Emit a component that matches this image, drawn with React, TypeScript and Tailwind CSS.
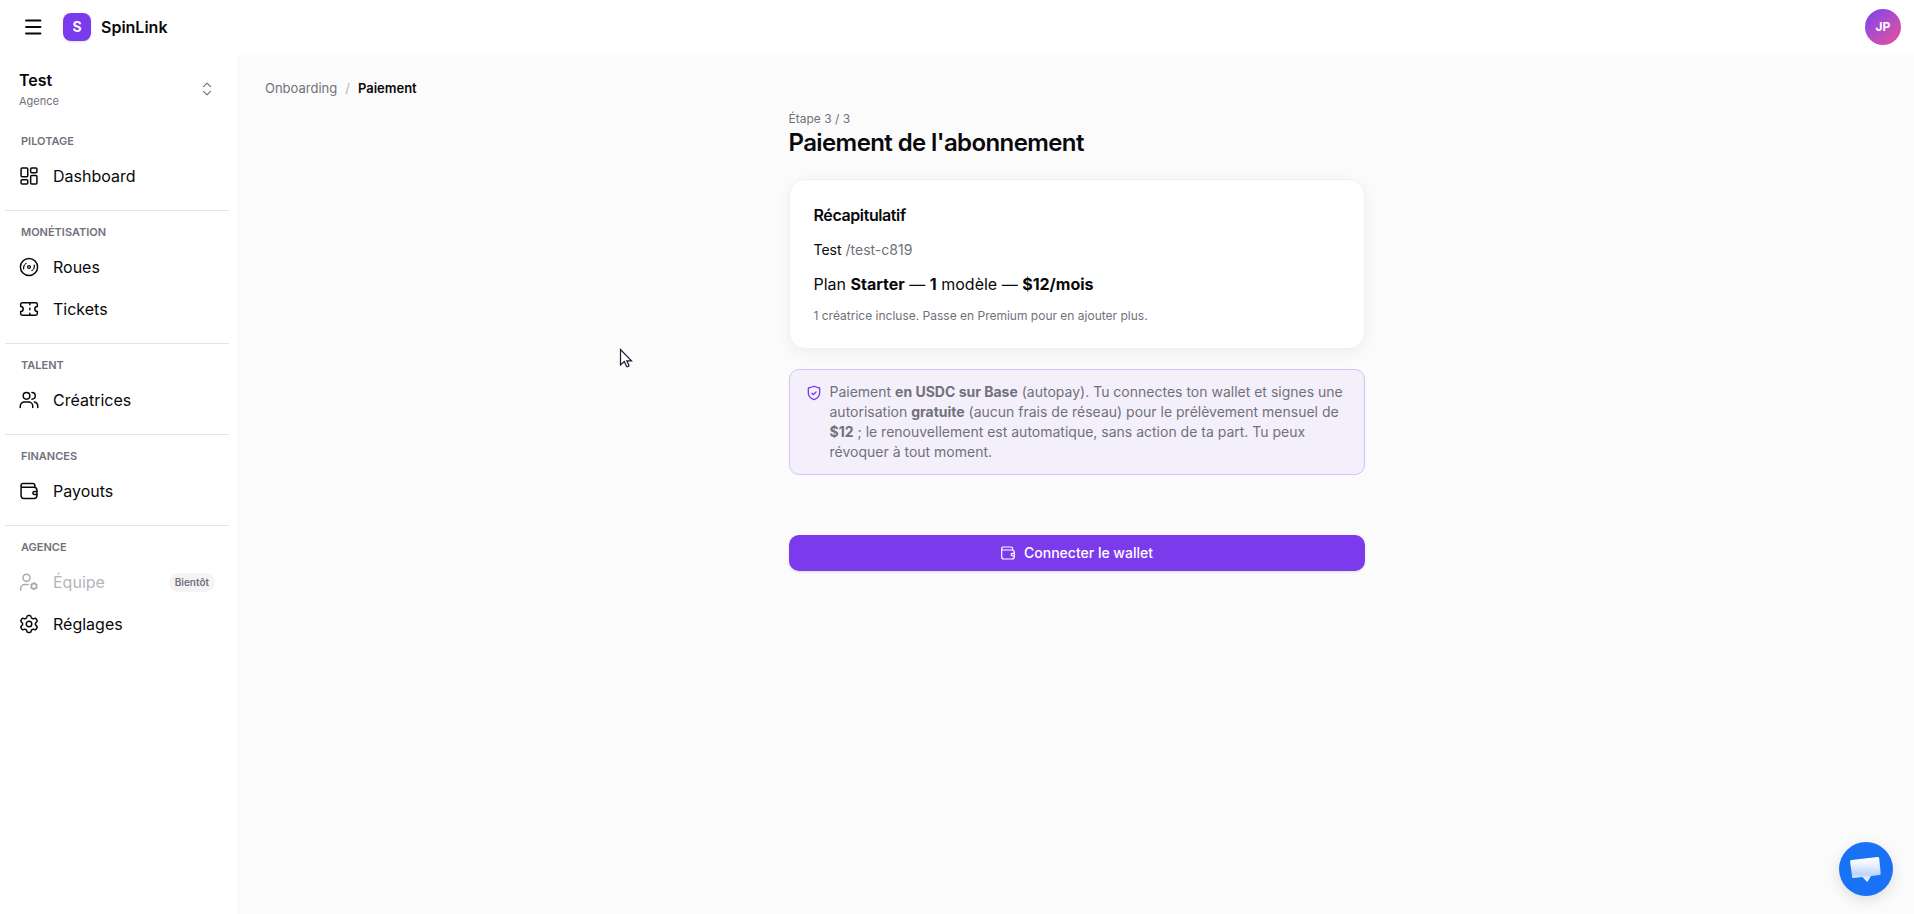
import type { ReactNode } from "react";

function Icon({ className, children }: { className: string; children: ReactNode }) {
  return (
    <svg viewBox="0 0 24 24" className={className} fill="none" stroke="currentColor" strokeWidth="1.8" strokeLinecap="round" strokeLinejoin="round" aria-hidden="true">
      {children}
    </svg>
  );
}

const dashboard = (
  <>
    <rect x="2.5" y="2.5" width="8" height="10.5" rx="1.2" />
    <rect x="14" y="2.5" width="7.5" height="5.5" rx="1.2" />
    <rect x="2.5" y="16.5" width="8" height="5" rx="1.2" />
    <rect x="14" y="11.5" width="7.5" height="10" rx="1.2" />
  </>
);
const disc = (
  <>
    <circle cx="12" cy="12" r="10.3" />
    <circle cx="12" cy="12" r="1.7" strokeWidth="1.5" />
    <path d="M5.600 14.300c-.3-1.800 0-3.300.9-4.700M7.900 8.200l.6-.6M18.400 9.700c.3 1.800 0 3.300-.9 4.700M16.100 15.800l-.6.6" strokeWidth="1.5" />
  </>
);
const ticket = (
  <>
    <path d="M2 9V6.500a2 2 0 0 1 2-2h16a2 2 0 0 1 2 2V9a3 3 0 0 0 0 6v2.500a2 2 0 0 1-2 2H4a2 2 0 0 1-2-2V15a3 3 0 0 0 0-6Z" />
    <path d="M13 4.500V7M13 11v2M13 17v2.500" />
  </>
);
const users = (
  <>
    <circle cx="9" cy="7" r="4" />
    <path d="M1.500 21v-1.500a5 5 0 0 1 5-5h5a5 5 0 0 1 5 5V21M15.500 3a4 4 0 0 1 0 8M18.500 14.500c2.400.5 4 2.400 4 5V21" />
  </>
);
const wallet = (
  <>
    <path d="M2.500 5v12.500c0 2.500 1 3.500 3.500 3.500h12c2.500 0 3.500-1 3.500-3.500V11c0-2.500-1-3.500-3.500-3.500H4.800A2.300 2.300 0 0 1 2.500 5.200 2.200 2.200 0 0 1 4.700 3H16.500c1.800 0 2.500.8 2.500 2.500v2" />
    <path d="M21.500 12.500h-3a1.800 1.800 0 0 0 0 3.700h3" />
  </>
);
const userSettings = (
  <>
    <circle cx="9" cy="7" r="4.200" />
    <path d="M2 21.500v-1.500a5 5 0 0 1 5-5h4" />
    <circle cx="18" cy="17" r="3.2" />
    <path d="M18 13v1M18 20v1M14.500 15l.9.500M20.600 18.500l.9.500M14.500 19l.9-.5M20.600 15.500l.9-.5" />
  </>
);
const gear = (
  <>
    <path d="m21.300 7.100-.5-.9c-.4-.700-.6-1-.9-1.100-.4-.1-.7 0-1.400.2l-1.200.3c-.5.1-.9 0-1.300-.2l-.4-.2c-.4-.2-.6-.5-.8-1l-.3-.9c-.2-.700-.3-1-.6-1.200-.3-.2-.6-.2-1.300-.2h-1.200c-.7 0-1 0-1.300.2-.3.200-.4.500-.6 1.200l-.3.900c-.2.500-.4.800-.8 1l-.4.200c-.4.200-.8.300-1.300.2l-1.200-.3c-.7-.2-1-.3-1.400-.2-.3.100-.5.400-.9 1.100l-.5.900c-.4.700-.5 1-.5 1.300 0 .4.300.6.800 1.200l1 1.100c.2.300.4.800.4 1.300s-.2 1-.4 1.300l-1 1.100c-.5.600-.8.800-.8 1.200 0 .3.100.6.500 1.300l.5.900c.4.700.6 1 .9 1.100.4.100.7 0 1.400-.2l1.200-.3c.5-.1.900 0 1.300.2l.4.200c.4.200.6.500.8 1l.3.900c.2.700.3 1 .6 1.200.3.200.6.200 1.300.2h1.200c.7 0 1 0 1.300-.2.300-.2.400-.5.600-1.200l.3-.9c.2-.5.4-.8.800-1l.4-.2c.4-.2.8-.3 1.300-.2l1.200.3c.7.200 1 .3 1.400.2.300-.1.500-.4.900-1.100l.5-.9c.4-.7.500-1 .5-1.300 0-.4-.3-.6-.8-1.200l-1-1.100c-.2-.300-.4-.8-.4-1.300s.2-1 .4-1.300l1-1.100c.5-.6.8-.8.800-1.200 0-.3-.1-.6-.5-1.300Z" />
    <circle cx="12" cy="12" r="3.300" />
  </>
);

type Item = { label: string; icon: ReactNode; soon?: boolean };
const sections: { title: string; items: Item[] }[] = [
  { title: "PILOTAGE", items: [{ label: "Dashboard", icon: dashboard }] },
  { title: "MONÉTISATION", items: [{ label: "Roues", icon: disc }, { label: "Tickets", icon: ticket }] },
  { title: "TALENT", items: [{ label: "Créatrices", icon: users }] },
  { title: "FINANCES", items: [{ label: "Payouts", icon: wallet }] },
  { title: "AGENCE", items: [{ label: "Équipe", icon: userSettings, soon: true }, { label: "Réglages", icon: gear }] },
];

function NavItem({ item }: { item: Item }) {
  if (item.soon) {
    return (
      <button type="button" disabled className="flex h-[42px] w-full items-center gap-3.5 px-3.5 text-left">
        <Icon className="size-5 text-[#a9a9ad]">{item.icon}</Icon>
        <span className="flex-1 text-[#b5b5b9]">{item.label}</span>
        <span className="rounded-full bg-[#f4f4f5] px-1.5 text-[10px] leading-[19px] font-semibold text-[#71717a]">Bientôt</span>
      </button>
    );
  }
  return (
    <a href="#" className="flex h-[42px] items-center gap-3.5 px-3.5">
      <Icon className="size-5">{item.icon}</Icon>
      {item.label}
    </a>
  );
}

function Sidebar() {
  return (
    <aside className="w-[237px] shrink-0 bg-white">
      <button type="button" className="flex h-[65px] w-full items-center justify-between pt-0.5 pr-[23px] pl-[19px] text-left">
        <span>
          <span className="block text-base leading-6 font-semibold">Test</span>
          <span className="block text-[11px] leading-[18px] text-[#71717a]">Agence</span>
        </span>
        <Icon className="size-[14px] text-[#71717a]">
          <path d="m6 8 6-6 6 6M6 16l6 6 6-6" strokeWidth="2" />
        </Icon>
      </button>
      <nav className="pr-2 pl-[5px]">
        {sections.map((s, i) => (
          <section key={s.title} className={i === 0 ? "pb-[13px]" : "border-t border-[#e4e4e7] pb-[13px]"}>
            <h2 className="px-4 pt-3.5 pb-1.5 text-[11px] leading-[15px] font-semibold text-[#71717a]">{s.title}</h2>
            {s.items.map((item) => <NavItem key={item.label} item={item} />)}
          </section>
        ))}
      </nav>
    </aside>
  );
}

export default function App() {
  return (
    <div className="flex min-h-screen flex-col bg-[#fbfbfb] font-[Inter,'Liberation_Sans',sans-serif] text-[#09090b]">
      <header className="flex h-[55px] items-center bg-white pr-[13px] pb-px pl-[21px]">
        <button type="button" aria-label="Menu" className="mr-[18px]">
          <Icon className="size-6"><path d="M5 5.500h14.500M5 12h14.500M5 18.500h14.500" /></Icon>
        </button>
        <a href="#" className="flex items-center gap-2.5 font-semibold">
          <span className="flex size-7 items-center justify-center rounded-lg bg-[#7c3aed] text-sm font-bold text-white shadow-sm">S</span>
          SpinLink
        </a>
        <button type="button" className="ml-auto size-9 rounded-full bg-linear-to-br from-[#7c3aed] to-[#ec4899] text-xs font-bold text-white">JP</button>
      </header>
      <div className="flex flex-1">
        <Sidebar />
        <main className="flex-1 pt-[23px] pr-[26px] pl-7">
          <nav aria-label="Fil d'Ariane" className="flex gap-2 text-[13px] leading-5">
            <a href="#" className="text-[#71717a]">Onboarding</a>
            <span className="text-[#b5b5b9]">/</span>
            <span className="font-semibold">Paiement</span>
          </nav>
          <div className="mx-auto max-w-xl pt-[13px]">
            <p className="text-xs leading-4 text-[#71717a]">Étape 3 / 3</p>
            <h1 className="text-2xl leading-8 font-semibold tracking-tight">Paiement de l'abonnement</h1>
            <section className="mt-5 rounded-2xl border border-[#f0f0f1] bg-white px-6 pt-[23px] pb-6 shadow-[0_4px_16px_rgba(0,0,0,0.05)]">
              <h2 className="text-base leading-6 font-semibold tracking-tight">Récapitulatif</h2>
              <p className="mt-[13px] text-sm leading-5">Test <span className="text-[#71717a]">/test-c819</span></p>
              <p className="mt-3 text-base leading-6">Plan <b>Starter</b> — <b>1</b> modèle — <b>$12/mois</b></p>
              <p className="mt-3 text-xs leading-4 text-[#71717a]">1 créatrice incluse. Passe en Premium pour en ajouter plus.</p>
            </section>
            <section className="mt-5 flex gap-2 rounded-[10px] border border-[#d3c0f8] bg-[#f4f0fb] px-4 py-3 text-[#71717a]">
              <Icon className="mt-[3px] size-4 shrink-0 text-[#7c3aed]">
                <path d="M12 2c3 0 4 2 8.500 2.500v7c0 5.500-4.500 9-8.500 10.500-4-1.500-8.500-5-8.500-10.500v-7C8 4 9 2 12 2ZM9 12.500l2 2 4-4" strokeWidth="2" />
              </Icon>
              <p className="text-sm leading-5">
                Paiement <b>en USDC sur Base</b> (autopay). Tu connectes ton wallet et signes une autorisation <b>gratuite</b> (aucun frais de réseau) pour le prélèvement mensuel de <b>$12</b> ; le renouvellement est automatique, sans action de ta part. Tu peux révoquer à tout moment.
              </p>
            </section>
            <button type="button" className="mt-[60px] flex h-9 w-full items-center justify-center gap-2 rounded-[10px] bg-[#7c3aed] text-sm font-medium text-white shadow-sm">
              <Icon className="size-4">{wallet}</Icon>
              Connecter le wallet
            </button>
          </div>
        </main>
      </div>
      <button type="button" aria-label="Ouvrir le chat" className="fixed right-[21px] bottom-[18px] size-[54px] rounded-full bg-[#1972f5] shadow-[0_4px_14px_rgba(0,0,0,0.12)]">
        <svg viewBox="0 0 54 54" aria-hidden="true">
          <defs>
            <linearGradient id="bubble" x1="0" y1="0" x2="0" y2="1">
              <stop offset="0" stopColor="#fff" />
              <stop offset=".3" stopColor="#edf3fe" />
              <stop offset=".7" stopColor="#bdd4fb" />
              <stop offset="1" stopColor="#fff" />
            </linearGradient>
          </defs>
          <path d="m12.500 18 26-3q1.500-.2 1.700 1.300l1.500 15q.1 1.500-1.300 1.700l-8.400 1-3.700 6-5-5-8.600 1q-1.500.1-1.600-1.300l-2-15q-.1-1.500 1.400-1.700Z" fill="url(#bubble)" />
        </svg>
      </button>
      <svg viewBox="0 0 14 20" className="pointer-events-none absolute top-[348px] left-[619px] h-5 w-3.5" aria-hidden="true">
        <path d="M1.500 1.500v15.500l3.800-3.500 2.300 5q1.500.8 2.400-1l-2.200-4.700h4.700Z" fill="#fff" stroke="#1b1b2b" strokeWidth="1.200" />
      </svg>
    </div>
  );
}
